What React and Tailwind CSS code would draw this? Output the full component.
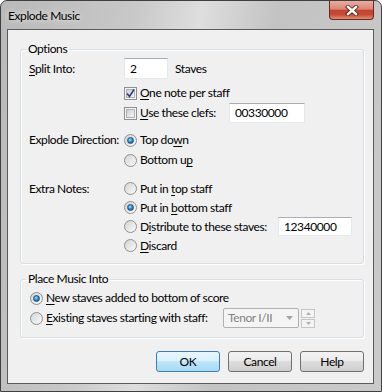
import React from 'react';

const font = { fontFamily: 'Lato, "Noto Sans", sans-serif' };

const Ul = ({ children }) => <span className="underline underline-offset-[2px] decoration-[1px]">{children}</span>;

const Checkbox = ({ checked }) => (
    <span className="w-[13px] h-[13px] shrink-0 border border-[#8e8f8f] bg-[#f4f4f4] flex items-center justify-center">
        <span className="w-[9px] h-[9px] border border-[#aeb3b9] bg-gradient-to-br from-[#cbcfd5] to-[#f6f6f6] flex items-center justify-center">
            {checked && (
                <svg width="9" height="9" viewBox="0 0 9 9" className="overflow-visible">
                    <path d="M1 4.5 L3.5 7.5 L8 0.5" fill="none" stroke="#2b3f7a" strokeWidth="1.6" />
                </svg>
            )}
        </span>
    </span>
);

const Radio = ({ checked }) => (
    <span className="w-[13px] h-[13px] shrink-0 rounded-full border border-[#8e8f8f] bg-gradient-to-br from-[#d4d4d4] to-[#fbfbfb] flex items-center justify-center">
        {checked && (
            <span className="w-[7px] h-[7px] rounded-full border border-[#1c5180] bg-[radial-gradient(circle_at_40%_35%,#a6e4ff_0%,#2c8fd4_45%,#0d4f8c_100%)]" />
        )}
    </span>
);

const TextBox = ({ value, className }) => (
    <div className={`h-full shrink-0 bg-white border border-[#e3e9ef] border-t-[#abadb3] flex items-center pl-[5px] ${className}`}>
        {value}
    </div>
);

const Option = ({ checked, children, className = 'h-[20px]' }) => (
    <div className={`flex items-center gap-[3px] whitespace-nowrap ${className}`}>
        <Radio checked={checked} />
        <span>{children}</span>
    </div>
);

const Button = ({ children, primary }) => (
    <button
        className={`w-[64px] h-[21px] rounded-[3px] border flex items-center justify-center ${
            primary
                ? 'border-[#3c7fb1] bg-[linear-gradient(to_bottom,#eaf6fd_0%,#d9f0fc_50%,#bee6fd_50%,#a7d9f5_100%)]'
                : 'border-[#707070] bg-[linear-gradient(to_bottom,#f2f2f2_0%,#ebebeb_50%,#dddddd_50%,#cfcfcf_100%)]'
        }`}
    >
        {children}
    </button>
);

export default function App() {
    return (
        <div style={font} className="w-[382px] h-[392px] text-[12px] leading-4 tracking-[-0.4px] text-black whitespace-nowrap">
            <div className="w-full h-full flex flex-col border border-[#3f3f3f] rounded-t-[7px] overflow-hidden bg-[linear-gradient(100deg,#b9b9b9_0%,#c8c8c8_30%,#dedede_45%,#c3c3c3_62%,#cacaca_100%)]">
                {/* title bar */}
                <div className="h-[28px] flex justify-between items-start">
                    <div className="pl-[7px] h-full flex items-center pt-[1px] [text-shadow:0_0_6px_#ffffff]">Explode Music</div>
                    <div className="mr-[7px] w-[45px] h-[19px] border border-t-0 border-[#6b2a1f] rounded-b-[4px] bg-[linear-gradient(to_bottom,#eaaca1_0%,#da8774_45%,#c5432f_52%,#c64a35_75%,#df8f70_100%)] flex items-center justify-center">
                        <svg width="14" height="11" viewBox="0 0 14 11">
                            <path d="M3 2 L11 9 M11 2 L3 9" stroke="#5a2118" strokeWidth="4.2" strokeLinecap="square" />
                            <path d="M3 2 L11 9 M11 2 L3 9" stroke="#ffffff" strokeWidth="2.4" strokeLinecap="square" />
                        </svg>
                    </div>
                </div>

                {/* client area */}
                <div className="ml-[6px] mr-[7px] mb-[7px] flex-1 border border-[#5b5b5b] bg-[#f0f0f0]">
                    {/* Options */}
                    <fieldset className="mt-[11px] ml-[12px] w-[344px] border border-[#d5dfe5] rounded-[3px] shadow-[inset_1px_1px_0_#ffffff,1px_1px_0_#ffffff] pb-[8px]">
                        <legend className="ml-[5px] px-[2px] leading-4">Options</legend>
                        <div className="pl-[8px]">
                            <div className="mt-[1px] h-[21px] flex items-center">
                                <div className="w-[95px]"><Ul>S</Ul>plit Into:</div>
                                <TextBox value="2" className="w-[44px]" />
                                <span className="ml-[7px]">Staves</span>
                            </div>
                            <div className="mt-[4px] ml-[95px] h-[20px] flex items-center gap-[3px]">
                                <Checkbox checked />
                                <span><Ul>O</Ul>ne note per staff</span>
                            </div>
                            <div className="ml-[95px] h-[20px] flex items-center gap-[3px]">
                                <Checkbox />
                                <span className="w-[86px]"><Ul>U</Ul>se these clefs:</span>
                                <TextBox value="00330000" className="w-[76px]" />
                            </div>

                            <div className="mt-[7px] flex">
                                <div className="w-[95px] h-[20px] flex items-center">Explode Direction:</div>
                                <div className="flex flex-col">
                                    <Option checked>Top do<Ul>w</Ul>n</Option>
                                    <Option>Bottom u<Ul>p</Ul></Option>
                                </div>
                            </div>

                            <div className="mt-[9px] flex">
                                <div className="w-[95px] h-[19px] flex items-center">Extra Notes:</div>
                                <div className="flex flex-col">
                                    <Option className="h-[19px]">Put in <Ul>t</Ul>op staff</Option>
                                    <Option checked className="h-[19px]">Put in <Ul>b</Ul>ottom staff</Option>
                                    <div className="h-[19px] flex items-center gap-[3px]">
                                        <Radio />
                                        <span className="w-[135px]">D<Ul>i</Ul>stribute to these staves:</span>
                                        <TextBox value="12340000" className="w-[74px]" />
                                    </div>
                                    <Option className="h-[19px]"><Ul>D</Ul>iscard</Option>
                                </div>
                            </div>
                        </div>
                    </fieldset>

                    {/* Place Music Into */}
                    <fieldset className="mt-[7px] ml-[12px] w-[344px] border border-[#d5dfe5] rounded-[3px] shadow-[inset_1px_1px_0_#ffffff,1px_1px_0_#ffffff] pb-[9px]">
                        <legend className="ml-[5px] px-[2px] leading-4">Place Music Into</legend>
                        <div className="pl-[9px]">
                            <Option checked className="mt-[1px] h-[20px]"><Ul>N</Ul>ew staves added to bottom of score</Option>
                            <div className="h-[20px] flex items-center gap-[3px]">
                                <Radio />
                                <span className="w-[174px]"><Ul>E</Ul>xisting staves starting with staff:</span>
                                <div className="w-[76px] h-[20px] border border-[#adb2b5] bg-[#f4f4f4] rounded-[2px] flex items-center justify-between pl-[4px] pr-[5px] text-[#838383]">
                                    <span>Tenor I/II</span>
                                    <svg width="7" height="4" viewBox="0 0 7 4"><path d="M0 0 H7 L3.5 4 Z" fill="#a3a3a3" /></svg>
                                </div>
                                <div className="ml-[-1px] flex flex-col gap-[1px] py-[1px]">
                                    <div className="w-[14px] h-[9px] border border-[#c6c6c6] bg-[#f4f4f4] flex items-center justify-center">
                                        <svg width="5" height="3" viewBox="0 0 5 3"><path d="M0 3 H5 L2.5 0 Z" fill="#b0b0b0" /></svg>
                                    </div>
                                    <div className="w-[14px] h-[9px] border border-[#c6c6c6] bg-[#f4f4f4] flex items-center justify-center">
                                        <svg width="5" height="3" viewBox="0 0 5 3"><path d="M0 0 H5 L2.5 3 Z" fill="#b0b0b0" /></svg>
                                    </div>
                                </div>
                            </div>
                        </div>
                    </fieldset>

                    {/* buttons */}
                    <div className="mt-[13px] ml-[12px] w-[344px] flex justify-end gap-[8px]">
                        <Button primary>OK</Button>
                        <Button>Cancel</Button>
                        <Button>Help</Button>
                    </div>
                </div>
            </div>
        </div>
    );
}
